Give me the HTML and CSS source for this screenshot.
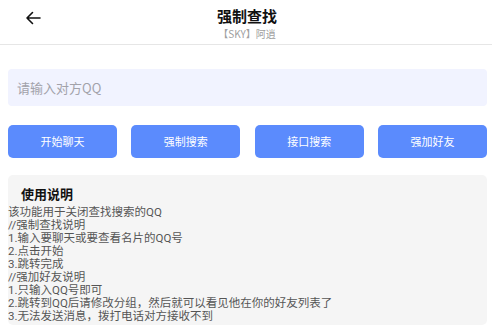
FILE: index.html
```html
<!DOCTYPE html>
<html lang="zh">
<head>
<meta charset="utf-8">
<link rel="stylesheet" href="styles.css">
</head>
<body>
<header class="topbar">
  <div class="back">
    <svg width="16" height="14" viewBox="0 0 16 14"><path d="M15 7H2M7.5 1.5L2 7l5.5 5.5" fill="none" stroke="#111" stroke-width="1.6" stroke-linecap="round" stroke-linejoin="round"/></svg>
  </div>
  <div class="titles">
    <div class="title">强制查找</div>
    <div class="subtitle">【SKY】阿逍</div>
  </div>
</header>
<main class="content">
  <div class="input">请输入对方QQ</div>
  <div class="buttons">
    <div class="btn">开始聊天</div>
    <div class="btn">强制搜索</div>
    <div class="btn">接口搜索</div>
    <div class="btn">强加好友</div>
  </div>
  <section class="card">
    <div class="card-title">使用说明</div>
    <div class="lines">
      <div>该功能用于关闭查找搜索的QQ</div>
      <div>//强制查找说明</div>
      <div>1.输入要聊天或要查看名片的QQ号</div>
      <div>2.点击开始</div>
      <div>3.跳转完成</div>
      <div>//强加好友说明</div>
      <div>1.只输入QQ号即可</div>
      <div>2.跳转到QQ后请修改分组，然后就可以看见他在你的好友列表了</div>
      <div>3.无法发送消息，拨打电话对方接收不到</div>
    </div>
  </section>
</main>
</body>
</html>
```
FILE: styles.css
```css
* { box-sizing: border-box; }
html, body { margin: 0; padding: 0; background: #fff; }
body {
  width: 492px;
  height: 333px;
  overflow: hidden;
  font-family: "Noto Sans CJK SC", "Noto Sans", sans-serif;
}
.topbar {
  height: 45px;
  border-bottom: 1px solid #e6e6e6;
  display: flex;
  align-items: flex-start;
  position: relative;
}
.back {
  position: absolute;
  left: 25px;
  top: 11px;
  width: 16px;
  height: 14px;
  display: flex;
}
.titles {
  flex: 1;
  display: flex;
  flex-direction: column;
  align-items: center;
  padding-top: 5px;
}
.title {
  font-size: 15px;
  font-weight: 700;
  color: #111;
  line-height: 22px;
  padding-left: 2px;
}
.subtitle {
  font-size: 10px;
  color: #a0a0a0;
  line-height: 12px;
  padding-left: 2px;
  margin-top: 1px;
}
.content {
  padding: 24px 5px 0 8px;
}
.input {
  height: 37px;
  background: #f1f3ff;
  border-radius: 4px;
  font-size: 13px;
  color: #a2a2aa;
  line-height: 37px;
  padding-left: 9px;
}
.buttons {
  margin-top: 19px;
  display: grid;
  grid-template-columns: repeat(4, 109px);
  justify-content: space-between;
}
.btn {
  height: 33px;
  background: #5b8bfd;
  border-radius: 5px;
  color: #fff;
  font-size: 11px;
  line-height: 33px;
  text-align: center;
}
.card {
  margin-top: 17px;
  height: 150px;
  background: #f5f5f5;
  border-radius: 5px;
  padding-top: 9px;
}
.card-title {
  font-size: 13px;
  font-weight: 700;
  color: #111;
  line-height: 19px;
  padding-left: 13px;
  margin-bottom: 3px;
}
.lines {
  font-family: Roboto, "Noto Sans CJK SC", sans-serif;
  font-size: 11.5px;
  line-height: 13px;
  color: #555;
  white-space: nowrap;
}
```
